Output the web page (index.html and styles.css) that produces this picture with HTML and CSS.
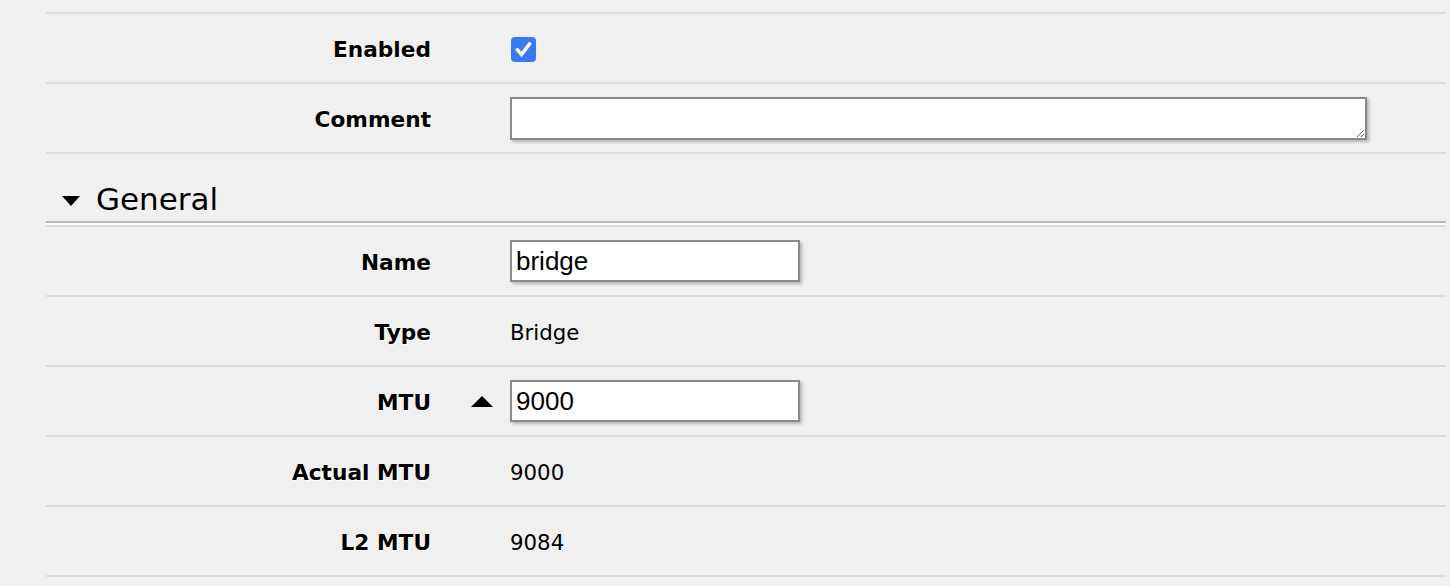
FILE: index.html
```html
<!DOCTYPE html>
<html>
<head>
<meta charset="utf-8">
<link rel="stylesheet" href="styles.css">
</head>
<body>
<div class="form">
  <div class="row">
    <div class="label">Enabled</div>
    <div class="mid"></div>
    <div class="value">
      <span class="check"><svg width="25" height="25" viewBox="0 0 25 25"><path d="M6.5 13 L10.5 17.5 L18.5 7" fill="none" stroke="#fff" stroke-width="3.4" stroke-linecap="square"/></svg></span>
    </div>
  </div>
  <div class="row">
    <div class="label">Comment</div>
    <div class="mid"></div>
    <div class="value"><textarea class="comment"></textarea></div>
  </div>
  <div class="section">
    <span class="tri-down"></span><span class="section-title">General</span>
  </div>
  <div class="row">
    <div class="label">Name</div>
    <div class="mid"></div>
    <div class="value"><input class="text" type="text" value="bridge"></div>
  </div>
  <div class="row">
    <div class="label">Type</div>
    <div class="mid"></div>
    <div class="value plain">Bridge</div>
  </div>
  <div class="row">
    <div class="label">MTU</div>
    <div class="mid"><span class="tri-up"></span></div>
    <div class="value"><input class="text" type="text" value="9000"></div>
  </div>
  <div class="row">
    <div class="label">Actual MTU</div>
    <div class="mid"></div>
    <div class="value plain">9000</div>
  </div>
  <div class="row">
    <div class="label">L2 MTU</div>
    <div class="mid"></div>
    <div class="value plain">9084</div>
  </div>
</div>
</body>
</html>
```

FILE: styles.css
```css
html, body {
  margin: 0;
  padding: 0;
  background: #f0f0f0;
}
body {
  font-family: "DejaVu Sans", Verdana, sans-serif;
  color: #000;
}
.form {
  margin-left: 46px;
  width: 1400px;
  padding-top: 12px;
}
.row {
  display: grid;
  grid-template-columns: 385px 79px 1fr;
  align-items: center;
  height: 68px;
  border-top: 2px solid #dcdcdc;
}
.row:last-child {
  border-bottom: 2px solid #dcdcdc;
}
.label {
  text-align: right;
  font-weight: bold;
  font-size: 21.7px;
  padding-top: 2px;
  text-shadow: 1px 1px 0 #fff;
}
.mid {
  display: flex;
  justify-content: center;
  align-items: center;
}
.value {
  display: flex;
  align-items: center;
}
.plain {
  font-size: 21.3px;
  padding-top: 2px;
}
.check {
  display: block;
  width: 25px;
  height: 25px;
  margin-left: 1px;
  margin-top: 2px;
  border-radius: 4px;
  background: #3a7bf4;
}
.check svg {
  display: block;
}
.comment {
  box-sizing: border-box;
  width: 857px;
  height: 43px;
  margin: 0;
  border: 2px solid #8a8a8a;
  background: #fff;
  box-shadow: 2px 2px 3px rgba(0,0,0,0.25);
  resize: vertical;
  font-family: "Liberation Sans", Arial, sans-serif;
  font-size: 24px;
}
.text {
  box-sizing: border-box;
  width: 290px;
  height: 42px;
  margin: 0;
  padding: 0 4px;
  border: 2px solid #8a8a8a;
  background: #fff;
  box-shadow: 2px 2px 3px rgba(0,0,0,0.25);
  font-family: "Liberation Sans", Arial, sans-serif;
  font-size: 26px;
  color: #000;
  outline: none;
}
.section {
  display: flex;
  align-items: flex-end;
  padding-left: 16px;
  border-top: 2px solid #dcdcdc;
  border-bottom: 2px solid #bbbbbb;
  box-sizing: border-box;
  height: 71px;
  margin-bottom: 2px;
  box-shadow: 0 2px 0 #fafafa;
}
.tri-down {
  width: 0;
  height: 0;
  border-left: 9px solid transparent;
  border-right: 9px solid transparent;
  border-top: 10px solid #000;
  margin-bottom: 15px;
  margin-right: 16px;
}
.section-title {
  font-size: 31px;
  line-height: 1;
  margin-bottom: 6px;
}
.tri-up {
  display: block;
  width: 0;
  height: 0;
  border-left: 11px solid transparent;
  border-right: 11px solid transparent;
  border-bottom: 11px solid #000;
  margin-left: 22px;
}
```
